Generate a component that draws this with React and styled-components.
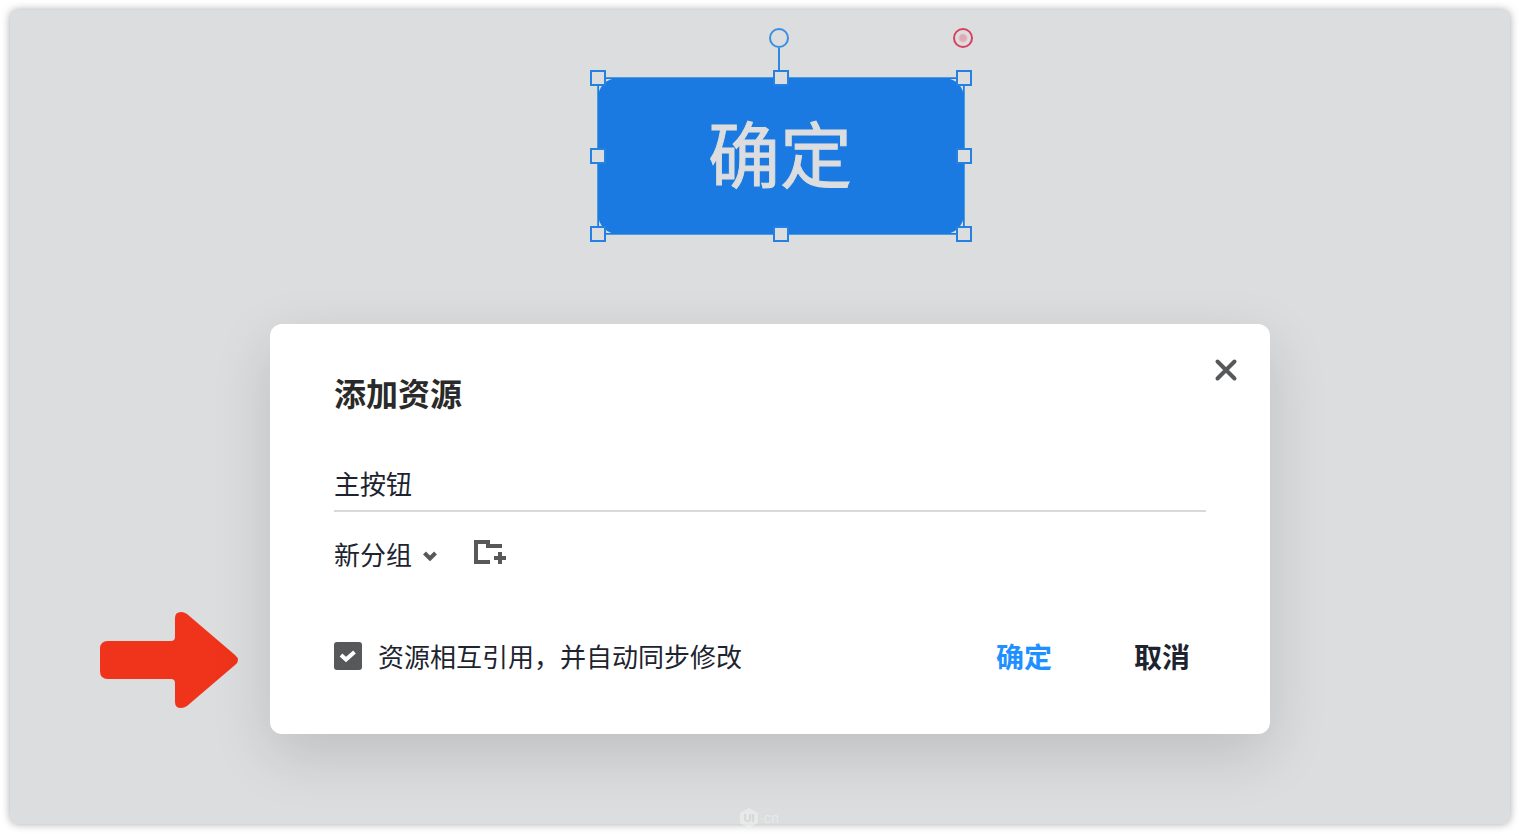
import React, { useState } from "react";
import styled, { createGlobalStyle } from "styled-components";

const handles = [
  [0, 0], [50, 0], [100, 0],
  [0, 50], [100, 50],
  [0, 100], [50, 100], [100, 100],
];

const App = () => {
  const [name, setName] = useState("主按钮");
  const [group, setGroup] = useState("新分组");
  const [sync, setSync] = useState(true);

  return (
    <>
      <GlobalStyle />
      <Page>
        <Canvas>
          <Stage>
            <Selection>
              <MainButton type="button">确定</MainButton>
              <RotateLine />
              <RotateHandle />
              <RadiusHandle />
              {handles.map(([x, y]) => (
                <Handle key={`${x}-${y}`} $x={x} $y={y} />
              ))}
            </Selection>
          </Stage>

          <DialogRow>
            <Arrow viewBox="0 0 138 96" aria-hidden="true">
              <path d="M8 29H71Q75 29 75 25V6Q75 0 81 0Q84 0 87 2L135 43Q141 48 135 53L87 94Q84 96 81 96Q75 96 75 90V71Q75 67 71 67H8Q0 67 0 59V37Q0 29 8 29Z" fill="#ef341b" />
            </Arrow>

            <Dialog role="dialog" aria-labelledby="dialog_title">
              <CloseButton type="button" aria-label="关闭">
                <svg width="24" height="24" viewBox="0 0 24 24">
                  <path d="M3.5 3.5L20.5 20.5M20.5 3.5L3.5 20.5" stroke="#56585a" strokeWidth="4" strokeLinecap="round" />
                </svg>
              </CloseButton>

              <Title id="dialog_title">添加资源</Title>

              <NameInput aria-label="名称" value={name} onChange={(e) => setName(e.target.value)} />

              <GroupRow>
                <SelectBox>
                  <GroupSelect aria-label="分组" value={group} onChange={(e) => setGroup(e.target.value)}>
                    <option>新分组</option>
                  </GroupSelect>
                  <Chevron viewBox="0 0 14 10" aria-hidden="true">
                    <path d="M1.5 2L7 7.5L12.5 2" fill="none" stroke="#56585a" strokeWidth="4" />
                  </Chevron>
                </SelectBox>
                <IconButton type="button" aria-label="新建分组">
                  <svg width="32" height="30" viewBox="0 0 32 30">
                    <path d="M16 22H2V2H14V6H28M26 12V24M20 18H32" fill="none" stroke="#56585a" strokeWidth="4" />
                  </svg>
                </IconButton>
              </GroupRow>

              <Footer>
                <SyncLabel>
                  <CheckBox>
                    <input type="checkbox" checked={sync} onChange={(e) => setSync(e.target.checked)} />
                    {sync && (
                      <svg viewBox="0 0 28 28" aria-hidden="true">
                        <path d="M7 13L12 17.5L20.5 10" fill="none" stroke="#fff" strokeWidth="4" />
                      </svg>
                    )}
                  </CheckBox>
                  资源相互引用，并自动同步修改
                </SyncLabel>
                <Actions>
                  <TextButton type="button" $primary>确定</TextButton>
                  <TextButton type="button">取消</TextButton>
                </Actions>
              </Footer>
            </Dialog>
          </DialogRow>

          <Watermark>
            <Logo>
              <svg viewBox="0 0 20 20" aria-hidden="true">
                <path d="M10 0L19 5V15L10 20L1 15V5Z" fill="#fff" fillOpacity="0.35" />
              </svg>
              <span>UI</span>
            </Logo>
            ·cn
          </Watermark>
        </Canvas>
      </Page>
    </>
  );
};

const GlobalStyle = createGlobalStyle`
* {
  box-sizing: border-box;
}

body {
  margin: 0;
  background: #fff;
  font-family: "Noto Sans CJK SC", sans-serif;
}

button, input, select {
  margin: 0;
  padding: 0;
  border: none;
  background: none;
  font-family: inherit;
  color: inherit;
}

button {
  cursor: pointer;
}

svg {
  display: block;
}
`;

const Page = styled.div`
  min-height: 100vh;
  padding: 10px;
  display: flex;
`;

const Canvas = styled.main`
  position: relative;
  flex: 1;
  padding-top: 67px;
  border-radius: 8px;
  background: #dcddde;
  box-shadow: 0 0 8px rgba(0, 0, 0, 0.35);
`;

const Stage = styled.div`
  display: flex;
  justify-content: center;
  padding-left: 42px;
`;

const Selection = styled.div`
  position: relative;
  width: 368px;
  height: 158px;
  border: 1px solid #4a9be0;
  box-shadow: inset 0 0 0 1px #1a7ae1;
`;

const MainButton = styled.button`
  display: block;
  width: 100%;
  height: 100%;
  padding: 0 2px 10px 0;
  border-radius: 20px;
  background: #1a7ae1;
  color: #dcddde;
  font-size: 72px;
  font-weight: 400;
  line-height: 104px;
  -webkit-text-stroke: 1px #dcddde;
`;

const Handle = styled.span`
  position: absolute;
  left: ${({ $x }) => $x}%;
  top: ${({ $y }) => $y}%;
  width: 16px;
  height: 16px;
  margin: -8px 0 0 -8px;
  border: 2px solid #2481e1;
  background: #dcddde;
`;

const RotateLine = styled.span`
  position: absolute;
  left: 50%;
  top: -30px;
  width: 2px;
  height: 24px;
  margin-left: -3px;
  background: #2f88e0;
`;

const RotateHandle = styled.span`
  position: absolute;
  left: 50%;
  top: -50px;
  width: 20px;
  height: 20px;
  margin-left: -12px;
  border: 2px solid #3a8fe0;
  border-radius: 50%;
`;

const RadiusHandle = styled.span`
  position: absolute;
  right: -9px;
  top: -50px;
  width: 20px;
  height: 20px;
  border: 2px solid #d9405f;
  border-radius: 50%;
  background: radial-gradient(circle, #e0a9b6 3px, transparent 5px);
`;

const DialogRow = styled.div`
  display: flex;
  align-items: flex-end;
  gap: 32px;
  margin-top: 89px;
  padding: 0 240px 0 90px;
`;

const Arrow = styled.svg`
  flex: none;
  width: 138px;
  height: 96px;
  margin-bottom: 26px;
`;

const Dialog = styled.section`
  position: relative;
  flex: 1;
  padding: 44px 64px 58px;
  border-radius: 12px;
  background: #fff;
  color: #1d2430;
  box-shadow: 0 20px 60px rgba(0, 0, 0, 0.14);
`;

const CloseButton = styled.button`
  position: absolute;
  top: 34px;
  right: 32px;
`;

const Title = styled.h2`
  margin: 0 0 48px;
  color: #2a2a2a;
  font-size: 32px;
  font-weight: 700;
  line-height: 48px;
`;

const NameInput = styled.input`
  display: block;
  width: 100%;
  height: 48px;
  padding-bottom: 10px;
  border-bottom: 2px solid #d8d9da;
  outline: none;
  font-size: 26px;
`;

const GroupRow = styled.div`
  display: flex;
  align-items: center;
  gap: 36px;
  margin-top: 23px;
`;

const SelectBox = styled.div`
  position: relative;
`;

const GroupSelect = styled.select`
  display: block;
  width: 104px;
  height: 40px;
  padding-bottom: 4px;
  appearance: none;
  font-size: 26px;
`;

const Chevron = styled.svg`
  position: absolute;
  right: 1px;
  top: 16px;
  width: 14px;
  height: 10px;
  pointer-events: none;
`;

const IconButton = styled.button`
  display: block;
`;

const Footer = styled.div`
  display: flex;
  align-items: center;
  justify-content: space-between;
  margin-top: 61px;
`;

const SyncLabel = styled.label`
  display: flex;
  align-items: center;
  gap: 16px;
  font-size: 26px;
  line-height: 40px;
`;

const CheckBox = styled.span`
  position: relative;
  width: 28px;
  height: 28px;

  input {
    display: block;
    width: 28px;
    height: 28px;
    appearance: none;
    border-radius: 3px;
    background: #56585a;
  }

  svg {
    position: absolute;
    inset: 0;
    pointer-events: none;
  }
`;

const Actions = styled.div`
  display: flex;
  gap: 50px;
`;

const TextButton = styled.button`
  padding: 0 16px;
  color: ${({ $primary }) => ($primary ? "#1e90ff" : "#1d2430")};
  font-size: 28px;
  font-weight: 700;
  line-height: 40px;
`;

const Watermark = styled.div`
  position: absolute;
  left: 0;
  right: 0;
  bottom: -4px;
  display: flex;
  align-items: center;
  justify-content: center;
  gap: 1px;
  padding-right: 2px;
  color: rgba(255, 255, 255, 0.4);
  font-family: Inter, sans-serif;
  font-size: 13px;
  line-height: 20px;
`;

const Logo = styled.span`
  position: relative;
  width: 20px;
  height: 20px;

  span {
    position: absolute;
    inset: 0;
    color: #d4d6d7;
    font-size: 11px;
    font-weight: 700;
    text-align: center;
  }
`;

export default App;
